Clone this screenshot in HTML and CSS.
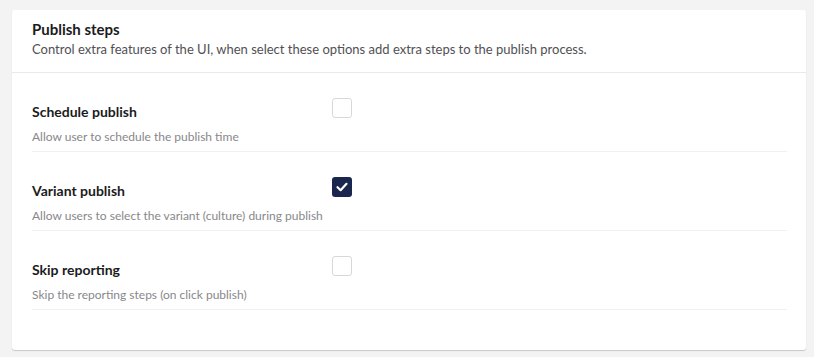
FILE: index.html
```html
<!DOCTYPE html>
<html lang="en">
<head>
    <meta charset="UTF-8">
    <meta name="viewport" content="width=device-width, initial-scale=1.0">
    <title>Publish steps</title>
    <link rel="stylesheet" href="styles.css">
</head>
<body>

    <div class="box">
        <div class="box-header">
            <h2 class="box-title">Publish steps</h2>
            <p class="box-desc">Control extra features of the UI, when select these options add extra steps to the publish process.</p>
        </div>

        <div class="box-content">
            <div class="prop-row">
                <div class="prop-label">
                    <h3>Schedule publish</h3>
                    <p>Allow user to schedule the publish time</p>
                </div>
                <div class="prop-editor">
                    <span class="check"></span>
                </div>
            </div>

            <div class="prop-row">
                <div class="prop-label">
                    <h3>Variant publish</h3>
                    <p>Allow users to select the variant (culture) during publish</p>
                </div>
                <div class="prop-editor">
                    <span class="check checked">
                        <svg width="20" height="20" viewBox="0 0 20 20">
                            <path d="M5.5 10.2 L8.6 13.2 L14.5 6.8" fill="none" stroke="#fff" stroke-width="2.2" stroke-linecap="round" stroke-linejoin="round"/>
                        </svg>
                    </span>
                </div>
            </div>

            <div class="prop-row">
                <div class="prop-label">
                    <h3>Skip reporting</h3>
                    <p>Skip the reporting steps (on click publish)</p>
                </div>
                <div class="prop-editor">
                    <span class="check"></span>
                </div>
            </div>
        </div>
    </div>

</body>
</html>
```

FILE: styles.css
```css
body {
    margin: 0;
    padding: 10px 8px 7px 12px;
    background: #f4f3f3;
    font-family: 'Lato', 'Liberation Sans', sans-serif;
    color: #1b1b1d;
}

.box {
    background: #ffffff;
    border-radius: 3px;
    box-shadow: 0 1px 1px 0 rgba(0, 0, 0, 0.18);
}

.box-header {
    padding: 9px 20px 13px;
    border-bottom: 1px solid #e9e9eb;
}

.box-title {
    margin: 0;
    font-size: 15px;
    line-height: 20px;
    font-weight: 700;
}

.box-desc {
    margin: 0;
    font-size: 13px;
    line-height: 20px;
    color: #515054;
}

.box-content {
    padding: 0 19px 40px 20px;
}

.prop-row {
    display: flex;
    padding: 20px 0 5px;
    border-bottom: 1px solid #f0f0f1;
}

.prop-label {
    width: 300px;
    flex-shrink: 0;
}

.prop-label h3 {
    margin: 0;
    padding-top: 9px;
    font-size: 14px;
    line-height: 20px;
    font-weight: 700;
}

.prop-label p {
    margin: 6px 0 0;
    font-size: 12px;
    line-height: 18px;
    color: #88878b;
}

.prop-editor {
    padding-top: 5px;
}

.check {
    display: block;
    box-sizing: border-box;
    width: 20px;
    height: 20px;
    border: 1px solid #d8d7d9;
    border-radius: 3px;
    background: #ffffff;
}

.check.checked {
    border: none;
    background: #1b264f;
}

.check svg {
    display: block;
}
```
